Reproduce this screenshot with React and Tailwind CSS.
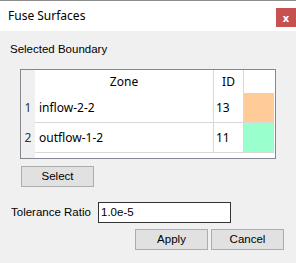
import React from "react";

const rows = [
  { n: 1, zone: "inflow-2-2", id: 13, color: "bg-[#ffcc99]" },
  { n: 2, zone: "outflow-1-2", id: 11, color: "bg-[#99ffcc]" },
];

const WinButton = ({ children, className }) => (
  <button
    className={`h-[21px] w-[73px] border border-[#adadad] bg-[#e1e1e1] text-[11.5px] text-black ${className}`}
    style={{ fontFamily: '"Liberation Sans", sans-serif' }}
  >
    {children}
  </button>
);

export default function App() {
  return (
    <div className="w-[296px] h-[263px] flex flex-col bg-[#f0f0f0] border-t border-[#8c8c8c] overflow-hidden">
      {/* Title bar */}
      <div className="h-[30px] bg-white flex justify-between">
        <span
          className="pl-[8px] pt-[6px] text-[12px] text-black"
          style={{ fontFamily: '"Noto Sans", sans-serif' }}
        >
          Fuse Surfaces
        </span>
        <div className="mt-[7px] w-[20px] h-[19px] bg-[#c75050] flex items-center justify-center text-white text-[11px] font-bold leading-none">
          x
        </div>
      </div>

      <div
        className="flex flex-col text-[11.5px] text-black"
        style={{ fontFamily: '"Liberation Sans", sans-serif' }}
      >
        <div className="pl-[10px] pt-[10px] h-[38px]">Selected Boundary</div>

        {/* Table */}
        <div
          className="ml-[20px] w-[256px] h-[90px] border border-[#828790] bg-white flex text-[12px]"
          style={{ fontFamily: '"Noto Sans", sans-serif' }}
        >
          <div className="w-[14px] bg-[#f0f0f0] flex flex-col">
            <div className="h-[23px]" />
            {rows.map((r) => (
              <div key={r.n} className="h-[30px] flex items-center justify-center text-[#333]">
                {r.n}
              </div>
            ))}
          </div>
          <div className="flex-1 flex flex-col">
            <div className="h-[23px] flex">
              <div className="w-[179px] border-r border-[#d8d8d8] flex items-center justify-center">Zone</div>
              <div className="w-[30px] border-r border-[#d8d8d8] flex items-center justify-center">ID</div>
              <div className="w-[30px]" />
            </div>
            {rows.map((r) => (
              <div key={r.n} className="h-[30px] flex">
                <div className="w-[179px] border-r border-b border-[#d8d8d8] flex items-center pl-[4px]">{r.zone}</div>
                <div className="w-[30px] border-r border-b border-[#d8d8d8] flex items-center pl-[2px]">{r.id}</div>
                <div className={`w-[30px] border-b border-[#d8d8d8] ${r.color}`} />
              </div>
            ))}
          </div>
        </div>

        <WinButton className="ml-[21px] mt-[7px]">Select</WinButton>

        <div className="flex items-center mt-[15px] h-[21px]">
          <span className="pl-[11px] w-[98px]">Tolerance Ratio</span>
          <div className="w-[133px] h-[21px] border border-[#333] bg-white pl-[2px] flex items-center">1.0e-5</div>
        </div>

        <div className="flex mt-[6px] pl-[135px] gap-[3px]">
          <WinButton>Apply</WinButton>
          <WinButton>Cancel</WinButton>
        </div>
      </div>
    </div>
  );
}
